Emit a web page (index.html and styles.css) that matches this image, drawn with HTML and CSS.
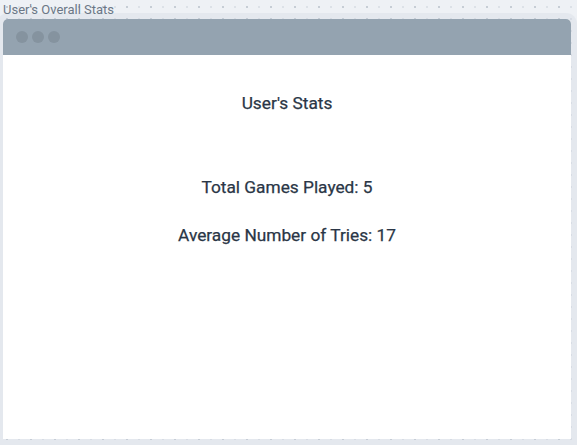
FILE: index.html
```html
<!DOCTYPE html>
<html>
<head>
<meta charset="utf-8">
<link rel="stylesheet" href="styles.css">
</head>
<body>
<div class="label">User's Overall Stats</div>
<div class="window">
  <div class="titlebar">
    <span class="dot"></span><span class="dot"></span><span class="dot"></span>
  </div>
  <div class="content">
    <h1 class="heading">User's Stats</h1>
    <p class="stat">Total Games Played: 5</p>
    <p class="stat">Average Number of Tries: 17</p>
  </div>
</div>
</body>
</html>
```
FILE: styles.css
```css
html, body {
  margin: 0;
  padding: 0;
  width: 577px;
  height: 445px;
  overflow: hidden;
}
body {
  background-color: #eef1f5;
  background-image:
    radial-gradient(circle at center, #c6cdd5 0.8px, transparent 1.3px),
    radial-gradient(circle at center, #dce1e7 0.8px, transparent 1.3px);
  background-size: 24px 12px, 12px 12px;
  background-position: -5px 1px, 1px 1px;
  font-family: Roboto, "Noto Sans", sans-serif;
}
.label {
  height: 19px;
  padding-left: 3px;
  font-size: 13px;
  line-height: 19px;
  color: #6b7786;
}
.window {
  margin-left: 3px;
  width: 568px;
  height: 420px;
  background: #fff;
  border-radius: 5px 5px 0 0;
  box-shadow: 0 0 0 6px rgba(200, 208, 218, 0.25);
  display: flex;
  flex-direction: column;
}
.titlebar {
  height: 36px;
  background: #94a3b0;
  border-radius: 5px 5px 0 0;
  display: flex;
  align-items: center;
  gap: 4px;
  padding-left: 13px;
}
.dot {
  width: 12px;
  height: 12px;
  border-radius: 50%;
  background: #85939f;
}
.content {
  display: flex;
  flex-direction: column;
  align-items: center;
  padding-top: 37px;
  color: #2a3646;
}
.heading,
.stat {
  font-size: 17.3px;
  font-weight: 400;
  line-height: 22px;
  -webkit-text-stroke: 0.25px #2a3646;
}
.heading {
  margin: 0;
  height: 84px;
}
.stat {
  margin: 0 0 26px 0;
}
```
